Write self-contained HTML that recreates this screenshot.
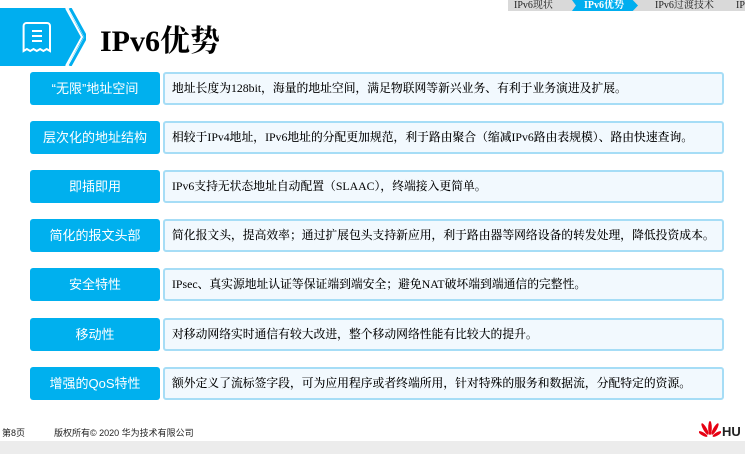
<!DOCTYPE html>
<html><head><meta charset="utf-8"><style>
*{margin:0;padding:0;box-sizing:border-box}
body{width:745px;height:454px;background:#fff;position:relative;overflow:hidden;font-family:"Liberation Sans","Noto Sans CJK SC",sans-serif}
.bc{position:absolute;top:0;left:508px;height:11px;width:237px;background:#d9d9d9;font-family:"Liberation Serif","Noto Serif CJK SC",serif;font-size:10px;line-height:11px;color:#222}
.bc span{position:absolute;top:0}
.act{position:absolute;left:64px;top:0;width:66px;height:11px;background:#00aeef;clip-path:polygon(0 0,92% 0,100% 50%,92% 100%,0 100%,6% 50%)}
.row{position:absolute;left:30px;width:694px;height:33px}
.lab{position:absolute;left:0;top:0;width:130px;height:33px;background:#00b0ee;border-radius:3px;color:#fff;font-size:13px;line-height:33px;text-align:center}
.txt{position:absolute;left:133px;top:0;width:561px;height:33px;background:#f2f9fe;border:2px solid #a6ddf6;border-radius:3px;font-family:"Liberation Serif","Noto Serif CJK SC",serif;font-size:11.8px;line-height:29px;padding-left:7px;color:#000;white-space:nowrap;font-weight:500}
</style></head><body>
<div class="bc"><span style="left:6px">IPv6现状</span><div class="act"></div><span style="left:76px;color:#fff;font-weight:bold">IPv6优势</span><span style="left:147px">IPv6过渡技术</span><span style="left:228px">IPv6</span></div>
<svg style="position:absolute;left:0;top:8px" width="86" height="58"><polygon points="0,0 67,0 84,29 67,58 0,58" fill="#00aeef"/><polyline points="70,0 86,29 70,58" fill="none" stroke="#00aeef" stroke-width="3"/><polyline points="66,0 82,29 66,58" fill="none" stroke="#fff" stroke-width="2"/>
<path d="M27 15 h20 a3 3 0 0 1 3 3 v25 l-3.3 -2 -3.3 2 -3.3 -2 -3.3 2 -3.3 -2 -3.3 2 -3.3 -2 -3.3 2 v-25 a3 3 0 0 1 3 -3z" fill="none" stroke="#fff" stroke-width="2"/><path d="M32 23h10M32 28h10M32 33h10" stroke="#fff" stroke-width="2"/></svg>
<div style="position:absolute;left:100px;top:16px;font-family:'Liberation Serif','Noto Serif CJK SC',serif;font-weight:bold;font-size:30px;color:#000">IPv6优势</div>
<div class="row" style="top:72px"><div class="lab">“无限”地址空间</div><div class="txt">地址长度为128bit，海量的地址空间，满足物联网等新兴业务、有利于业务演进及扩展。</div></div>
<div class="row" style="top:121px"><div class="lab">层次化的地址结构</div><div class="txt">相较于IPv4地址，IPv6地址的分配更加规范，利于路由聚合（缩减IPv6路由表规模）、路由快速查询。</div></div>
<div class="row" style="top:170px"><div class="lab">即插即用</div><div class="txt">IPv6支持无状态地址自动配置（SLAAC），终端接入更简单。</div></div>
<div class="row" style="top:219px"><div class="lab">简化的报文头部</div><div class="txt">简化报文头，提高效率；通过扩展包头支持新应用，利于路由器等网络设备的转发处理，降低投资成本。</div></div>
<div class="row" style="top:268px"><div class="lab">安全特性</div><div class="txt">IPsec、真实源地址认证等保证端到端安全；避免NAT破坏端到端通信的完整性。</div></div>
<div class="row" style="top:318px"><div class="lab">移动性</div><div class="txt">对移动网络实时通信有较大改进，整个移动网络性能有比较大的提升。</div></div>
<div class="row" style="top:367px"><div class="lab">增强的QoS特性</div><div class="txt">额外定义了流标签字段，可为应用程序或者终端所用，针对特殊的服务和数据流，分配特定的资源。</div></div>
<div style="position:absolute;left:2px;top:426px;font-size:9px;color:#222">第8页</div>
<div style="position:absolute;left:54px;top:426px;font-size:9px;color:#222">版权所有© 2020 华为技术有限公司</div>
<svg style="position:absolute;left:699px;top:421px" width="22" height="20"><g fill="#e60012"><ellipse cx="11" cy="7" rx="1.8" ry="7"/><ellipse cx="6" cy="8" rx="1.8" ry="6.5" transform="rotate(-30 6 8)"/><ellipse cx="16" cy="8" rx="1.8" ry="6.5" transform="rotate(30 16 8)"/><ellipse cx="4" cy="13" rx="1.6" ry="5" transform="rotate(-60 4 13)"/><ellipse cx="18" cy="13" rx="1.6" ry="5" transform="rotate(60 18 13)"/></g></svg>
<div style="position:absolute;left:722px;top:424px;font-size:13px;font-weight:bold;color:#222">HU</div>
<div style="position:absolute;left:0;top:441px;width:745px;height:13px;background:#ececec"></div>
</body></html>
